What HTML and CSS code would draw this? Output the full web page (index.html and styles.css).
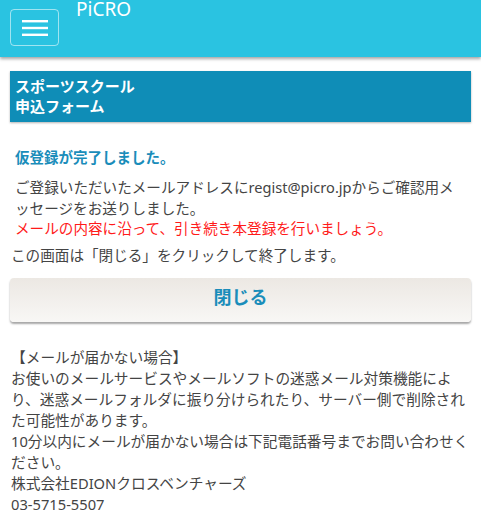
FILE: index.html
```html
<!DOCTYPE html>
<html>
<head>
    <meta charset="utf-8">
    <title>PiCRO 仮登録完了</title>
    <link rel="stylesheet" href="styles.css">
</head>
<body>
    <div class="header">
        <button class="menu-btn">
            <svg width="26" height="16" viewBox="0 0 26 16">
                <rect x="0" y="0" width="26" height="2.4" fill="#fff"/>
                <rect x="0" y="6.8" width="26" height="2.4" fill="#fff"/>
                <rect x="0" y="13.6" width="26" height="2.4" fill="#fff"/>
            </svg>
        </button>
        <div class="logo">PiCRO</div>
    </div>

    <div class="content">
        <div class="banner">スポーツスクール<br>申込フォーム</div>

        <h3 class="done">仮登録が完了しました。</h3>
        <p class="msg">
            ご登録いただいたメールアドレスにregist@picro.jpからご確認用メッセージをお送りしました。<br>
            <span class="red">メールの内容に沿って、引き続き本登録を行いましょう。</span>
        </p>
        <p class="close-note">この画面は「閉じる」をクリックして終了します。</p>

        <button class="close-btn">閉じる</button>

        <p class="notice">
            【メールが届かない場合】<br>
            お使いのメールサービスやメールソフトの迷惑メール対策機能により、迷惑メールフォルダに振り分けられたり、サーバー側で削除された可能性があります。<br>
            10分以内にメールが届かない場合は下記電話番号までお問い合わせください。<br>
            株式会社EDIONクロスベンチャーズ<br>
            03-5715-5507
        </p>
    </div>
</body>
</html>
```

FILE: styles.css
```css
body {
    margin: 0;
    font-family: "Noto Sans", "Noto Sans CJK JP", sans-serif;
    color: #444;
    background: #fff;
}
.header {
    height: 57px;
    background: #2ac3e1;
    box-shadow: 0 2px 3px rgba(0,0,0,0.35);
    display: flex;
    align-items: flex-start;
}
.menu-btn {
    margin: 9px 0 0 10px;
    width: 49px;
    height: 37px;
    border: 1px solid rgba(255,255,255,0.55);
    border-radius: 4px;
    background: transparent;
    display: flex;
    align-items: center;
    justify-content: center;
    padding: 0;
}
.logo {
    color: #fff;
    font-size: 19px;
    line-height: 18px;
    margin: 0 0 0 17px;
}
.content {
    padding: 14px 10px 0;
}
.banner {
    background: #0f8db7;
    color: #fff;
    font-weight: bold;
    font-size: 15px;
    line-height: 20px;
    padding: 5px 5px 6px;
    box-shadow: 0 1px 2px rgba(0,0,0,0.3);
}
.done {
    color: #1a8dba;
    font-size: 14.5px;
    line-height: 20px;
    margin: 25px 0 0 5px;
}
.msg {
    font-size: 14.6px;
    line-height: 20.5px;
    margin: 10px 12px 0 5px;
}
.red {
    color: #ff1a1a;
}
.close-note {
    font-size: 14.6px;
    line-height: 20px;
    margin: 6px 0 0 1px;
}
.close-btn {
    display: block;
    width: 100%;
    height: 44px;
    margin-top: 13px;
    padding: 0 0 7px;
    border: none;
    border-radius: 4px;
    background: linear-gradient(#ece8e3, #f8f7f5);
    box-shadow: 0 2px 2px rgba(0,0,0,0.35);
    color: #1a8dba;
    font-family: "Noto Sans", "Noto Sans CJK JP", sans-serif;
    font-weight: bold;
    font-size: 18px;
}
.notice {
    font-size: 14.7px;
    line-height: 21px;
    margin: 25px 0 0 1px;
}
```
